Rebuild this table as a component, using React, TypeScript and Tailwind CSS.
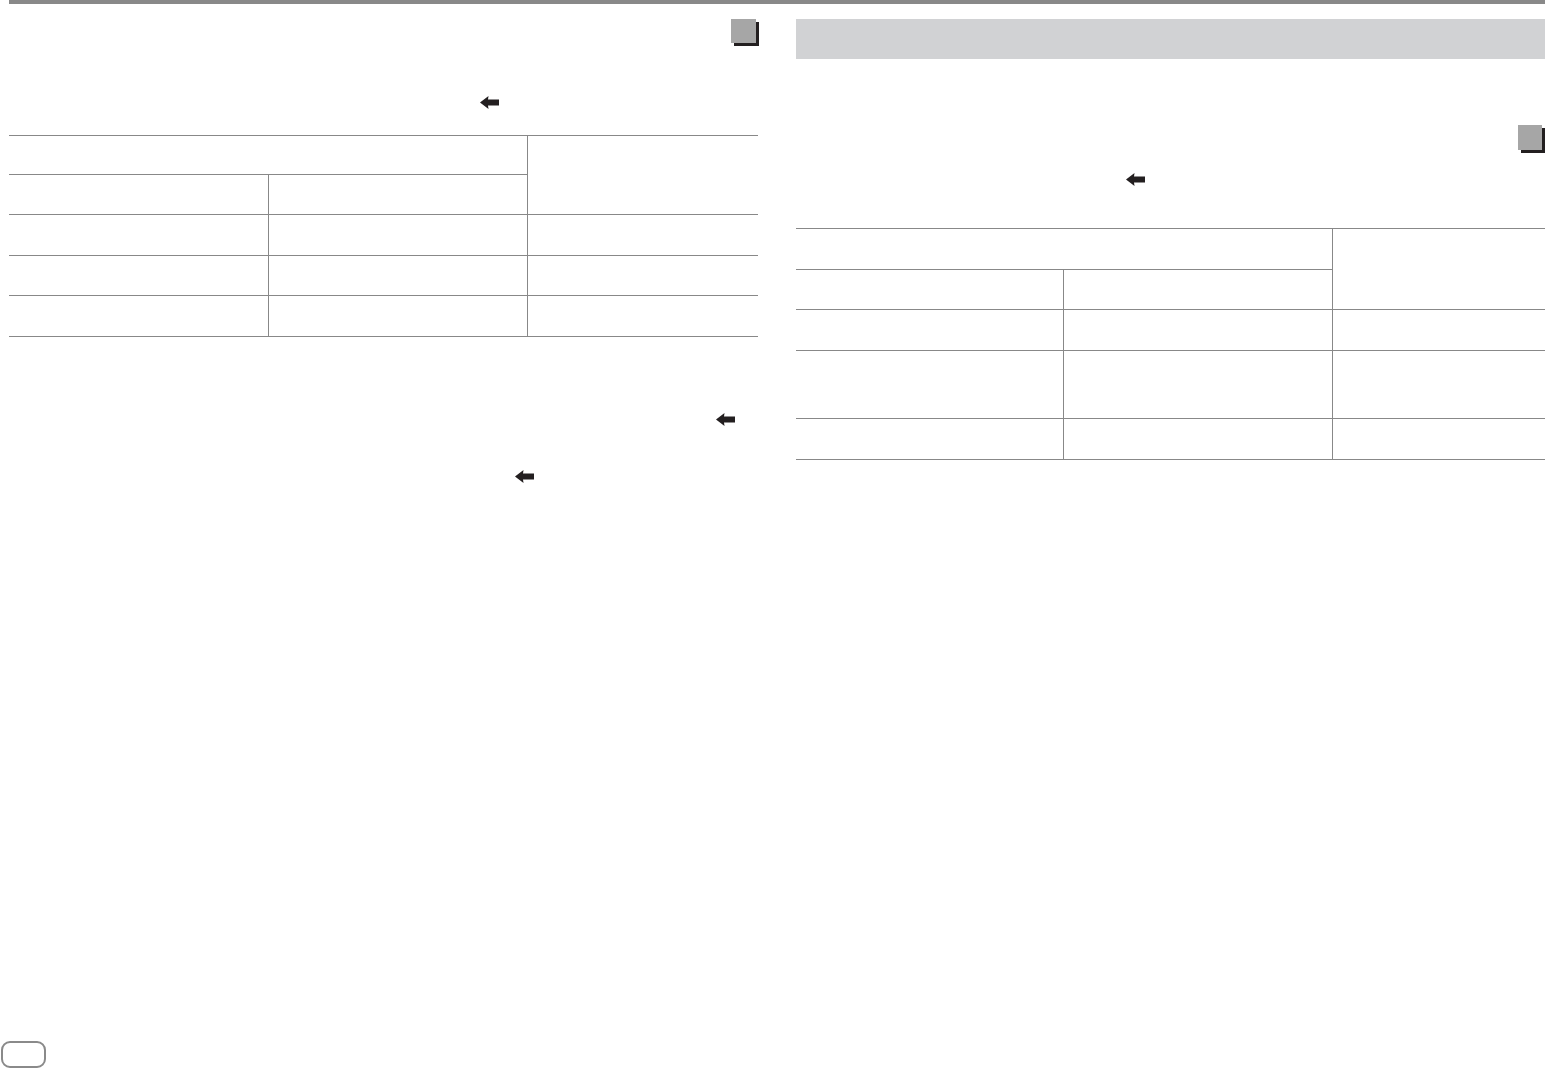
import React from "react";

function Arrow() {
  return (
    <svg width="19" height="13" viewBox="0 0 19 13" className="block">
      <path d="M0 6.5 L8.5 0 L8 3.5 L19 3.5 L19 9.5 L8 9.5 L8.5 13 Z" fill="#231f20" />
    </svg>
  );
}

function Square() {
  return <div className="w-[25px] h-[24px] bg-[#a6a6a6] shadow-[3px_3px_0_#231f20]" />;
}

const L = "border-[#888888]";

function LeftTable() {
  return (
    <div className={`grid grid-cols-[259px_259px_1fr] grid-rows-[39px_40px_41px_40px_41px] border-t ${L}`}>
      <div className={`col-span-2 border-b ${L}`} />
      <div className={`row-span-2 border-l border-b ${L}`} />
      <div className={`border-b ${L}`} />
      <div className={`border-l border-b ${L}`} />
      {[0, 1, 2].map((r) => (
        <React.Fragment key={r}>
          <div className={`border-b ${L}`} />
          <div className={`border-l border-b ${L}`} />
          <div className={`border-l border-b ${L}`} />
        </React.Fragment>
      ))}
    </div>
  );
}

function RightTable() {
  return (
    <div className={`grid grid-cols-[267px_269px_1fr] grid-rows-[41px_40px_41px_68px_41px] border-t ${L}`}>
      <div className={`col-span-2 border-b ${L}`} />
      <div className={`row-span-2 border-l border-b ${L}`} />
      <div className={`border-b ${L}`} />
      <div className={`border-l border-b ${L}`} />
      {[0, 1, 2].map((r) => (
        <React.Fragment key={r}>
          <div className={`border-b ${L}`} />
          <div className={`border-l border-b ${L}`} />
          <div className={`border-l border-b ${L}`} />
        </React.Fragment>
      ))}
    </div>
  );
}

export default function App() {
  return (
    <div className="w-[1545px] h-[1069px] bg-white flex flex-col overflow-hidden" style={{ fontFamily: '"Liberation Sans", Arial, sans-serif' }}>
      <div className="ml-[9px] h-[4px] bg-[#898989]" />
      <div className="flex pl-[9px] gap-[38px] pt-[15px]">
        {/* left column */}
        <div className="w-[749px] flex flex-col">
          <div className="self-end mr-[2px]">
            <Square />
          </div>
          <div className="ml-[471px] mt-[53px]">
            <Arrow />
          </div>
          <div className="mt-[26px]">
            <LeftTable />
          </div>
          <div className="ml-[707px] mt-[76px]">
            <Arrow />
          </div>
          <div className="ml-[506px] mt-[44px]">
            <Arrow />
          </div>
        </div>
        {/* right column */}
        <div className="w-[749px] flex flex-col">
          <div className="h-[40px] bg-[#d1d2d4]" />
          <div className="self-end mr-[3px] mt-[66px]">
            <div className="w-[24px] h-[25px] bg-[#a6a6a6] shadow-[3px_3px_0_#231f20]" />
          </div>
          <div className="ml-[330px] mt-[23px]">
            <Arrow />
          </div>
          <div className="mt-[42px]">
            <RightTable />
          </div>
        </div>
      </div>
      <div className="mt-auto pb-px pl-px">
        <div className="w-[45px] h-[27px] border-2 border-[#8a8a8a] rounded-[9px]" />
      </div>
    </div>
  );
}
